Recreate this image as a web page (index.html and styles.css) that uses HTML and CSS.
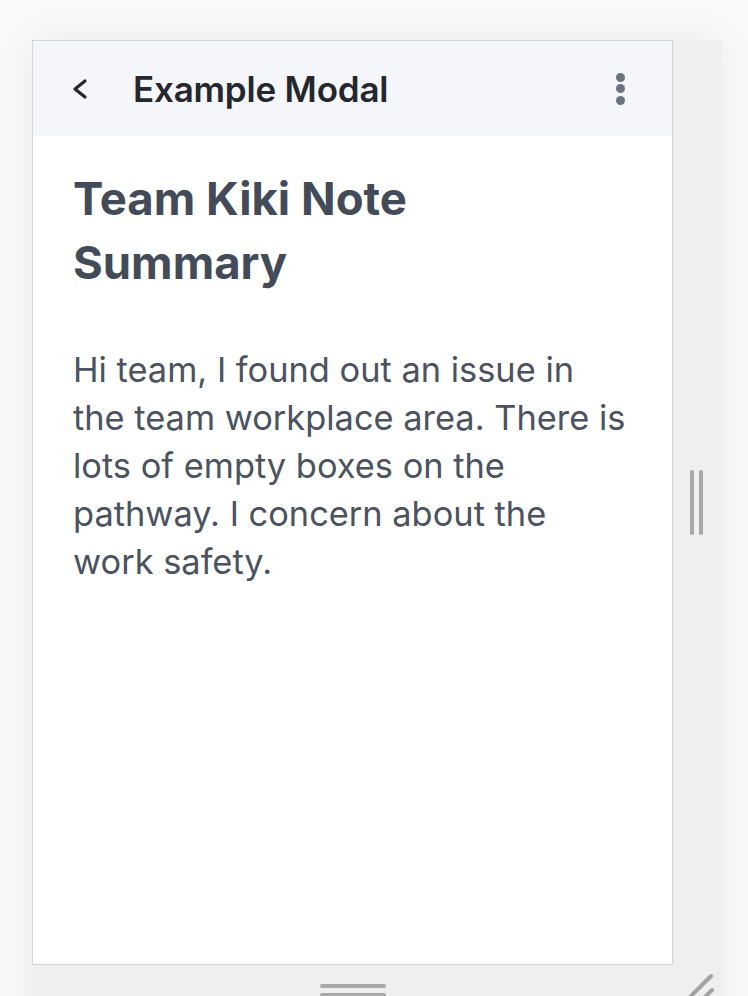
FILE: index.html
```html
<!DOCTYPE html>
<html lang="en">
<head>
<meta charset="utf-8">
<title>Example Modal</title>
<link rel="stylesheet" href="styles.css">
</head>
<body>
<div class="frame">
  <section class="card">
    <header class="card-header">
      <button class="icon-btn back" aria-label="Back">
        <svg width="18" height="22" viewBox="0 0 18 22"><path d="M14 3 L4 11 L14 19" fill="none" stroke="#24272d" stroke-width="3.2" stroke-linecap="round" stroke-linejoin="round"/></svg>
      </button>
      <h1 class="title">Example Modal</h1>
      <button class="icon-btn more" aria-label="More">
        <span class="dot"></span><span class="dot"></span><span class="dot"></span>
      </button>
    </header>
    <div class="card-body">
      <h2 class="heading">Team Kiki Note Summary</h2>
      <p class="text">Hi team, I found out an issue in the team workplace area. There is lots of empty boxes on the pathway. I concern about the work safety.</p>
    </div>
  </section>
  <div class="side-handle"><span></span><span></span></div>
  <div class="bottom-handle"><span></span><span></span></div>
  <div class="corner">
    <svg width="36" height="26" viewBox="0 0 36 26"><path d="M31 3 L9 25 M32 17 L24 25" stroke="#a3a3a3" stroke-width="4" stroke-linecap="round" fill="none"/></svg>
  </div>
</div>
</body>
</html>
```
FILE: styles.css
```css
* { box-sizing: border-box; }
html, body { margin: 0; height: 100%; }
body {
  background: #f9f9f9;
  font-family: Inter, "Noto Sans", sans-serif;
  overflow: hidden;
}
.frame {
  margin: 40px 0 0 32px;
  width: 690px;
  height: 990px;
  background: #efefef;
  box-shadow: 0 0 40px rgba(0,0,0,0.06);
  display: grid;
  grid-template-columns: 641px 1fr;
  grid-template-rows: 925px 1fr;
}
.card {
  background: #fff;
  border: 1px solid #d5d5d5;
  display: flex;
  flex-direction: column;
}
.card-header {
  height: 95px;
  background: #f5f6fa;
  display: flex;
  align-items: center;
  padding: 0 40px 0 38px;
}
.icon-btn {
  border: 0;
  background: none;
  padding: 0;
  display: flex;
}
.back { width: 62px; margin-top: 0; }
.title {
  margin: 0;
  flex: 1;
  font-size: 35px;
  font-weight: 600;
  color: #24272d;
  letter-spacing: -0.2px;
}
.more {
  flex-direction: column;
  gap: 2.5px;
  margin-right: 7px;
}
.dot {
  width: 9px; height: 9px;
  border-radius: 50%;
  background: #6b7280;
}
.card-body { padding: 31px 40px; }
.heading {
  margin: 0;
  font-size: 45.5px;
  line-height: 64px;
  font-weight: 700;
  color: #434b58;
  width: 380px;
}
.text {
  margin: 51px 0 0;
  font-size: 34.4px;
  line-height: 48px;
  color: #4b5360;
  width: 556px;
}
.side-handle {
  display: flex;
  gap: 5px;
  align-items: center;
  justify-content: flex-start;
  padding-left: 17px;
}
.side-handle span, .bottom-handle span {
  display: block;
  background: #a8a8a8;
  border-radius: 2px;
}
.side-handle span { width: 4px; height: 65px; }
.bottom-handle {
  display: flex;
  flex-direction: column;
  align-items: center;
  gap: 5px;
  padding-top: 19px;
}
.bottom-handle span { width: 66px; height: 4px; }
.corner {
  display: flex;
  justify-content: flex-end;
  align-items: flex-start;
  padding-top: 8px;
  padding-right: 6px;
}
```
